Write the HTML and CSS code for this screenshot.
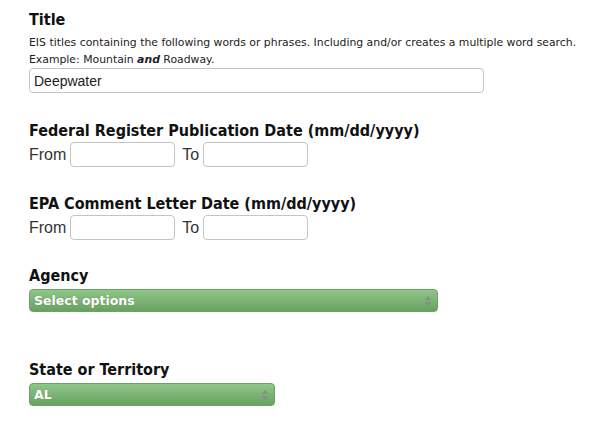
FILE: index.html
```html
<!DOCTYPE html>
<html>
<head>
<meta charset="utf-8">
<link rel="stylesheet" href="styles.css">
</head>
<body>
<form class="search">
  <section class="field field-title">
    <h3 class="label">Title</h3>
    <p class="hint">EIS titles containing the following words or phrases. Including and/or creates a multiple word search.<br>Example: Mountain <b><i>and</i></b> Roadway.</p>
    <input class="text wide" type="text" value="Deepwater">
  </section>
  <section class="field field-date">
    <h3 class="label">Federal Register Publication Date (mm/dd/yyyy)</h3>
    <div class="range">
      <span class="word">From</span><input class="text date" type="text">
      <span class="word to">To</span><input class="text date" type="text">
    </div>
  </section>
  <section class="field field-date">
    <h3 class="label">EPA Comment Letter Date (mm/dd/yyyy)</h3>
    <div class="range">
      <span class="word">From</span><input class="text date" type="text">
      <span class="word to">To</span><input class="text date" type="text">
    </div>
  </section>
  <section class="field field-agency">
    <h3 class="label">Agency</h3>
    <div class="select agency"><span>Select options</span><span class="arrows"></span></div>
  </section>
  <section class="field field-state">
    <h3 class="label">State or Territory</h3>
    <div class="select state"><span>AL</span><span class="arrows"></span></div>
  </section>
</form>
</body>
</html>
```
FILE: styles.css
```css
html, body { margin: 0; padding: 0; background: #fff; }
body { font-family: "Liberation Sans", Arial, sans-serif; color: #222; }
.search { padding: 10px 0 0 29px; }
.field { margin: 0; }
.label {
  margin: 0;
  font-family: "DejaVu Sans Condensed", "DejaVu Sans", sans-serif;
  font-weight: bold;
  font-size: 16px;
  line-height: 20px;
  color: #111;
}
.hint {
  margin: 4px 0 0;
  font-family: "DejaVu Sans", sans-serif;
  font-size: 10.85px;
  line-height: 17px;
  color: #222;
}
.text {
  box-sizing: border-box;
  height: 25px;
  border: 1px solid #c4c4c4;
  border-radius: 4px;
  padding: 0 4px;
  font-family: "Liberation Sans", Arial, sans-serif;
  font-size: 14px;
  color: #222;
  background: #fff;
  outline: none;
}
.wide { display: block; width: 455px; margin-top: 0; }
.field-date { margin-top: 28px; }
.field-date + .field-date { margin-top: 27px; }
.range { display: flex; align-items: center; margin-top: 1px; }
.word { font-size: 16px; color: #333; margin-right: 4px; }
.to { margin-left: 7px; margin-right: 4px; }
.date { width: 105px; }
.field-agency { margin-top: 26px; }
.field-state { margin-top: 48px; }
.select {
  box-sizing: border-box;
  display: flex;
  align-items: center;
  justify-content: space-between;
  height: 23px;
  margin-top: 3px;
  padding: 0 6px 0 4px;
  border: 1px solid #6aa463;
  border-radius: 4px;
  background: linear-gradient(#8fc689, #68a160);
  color: #fff;
  font-family: "DejaVu Sans", sans-serif;
  font-weight: bold;
  font-size: 12.5px;
  text-shadow: 0 0 1px rgba(0,0,0,0.25);
}
.agency { width: 409px; }
.state { width: 246px; }
.arrows { position: relative; width: 6px; height: 10px; }
.arrows::before, .arrows::after {
  content: "";
  position: absolute;
  left: 0;
  border-left: 3px solid transparent;
  border-right: 3px solid transparent;
}
.arrows::before { top: 0; border-bottom: 4px solid #8a8a8a; }
.arrows::after { bottom: 0; border-top: 4px solid #8a8a8a; }
```
